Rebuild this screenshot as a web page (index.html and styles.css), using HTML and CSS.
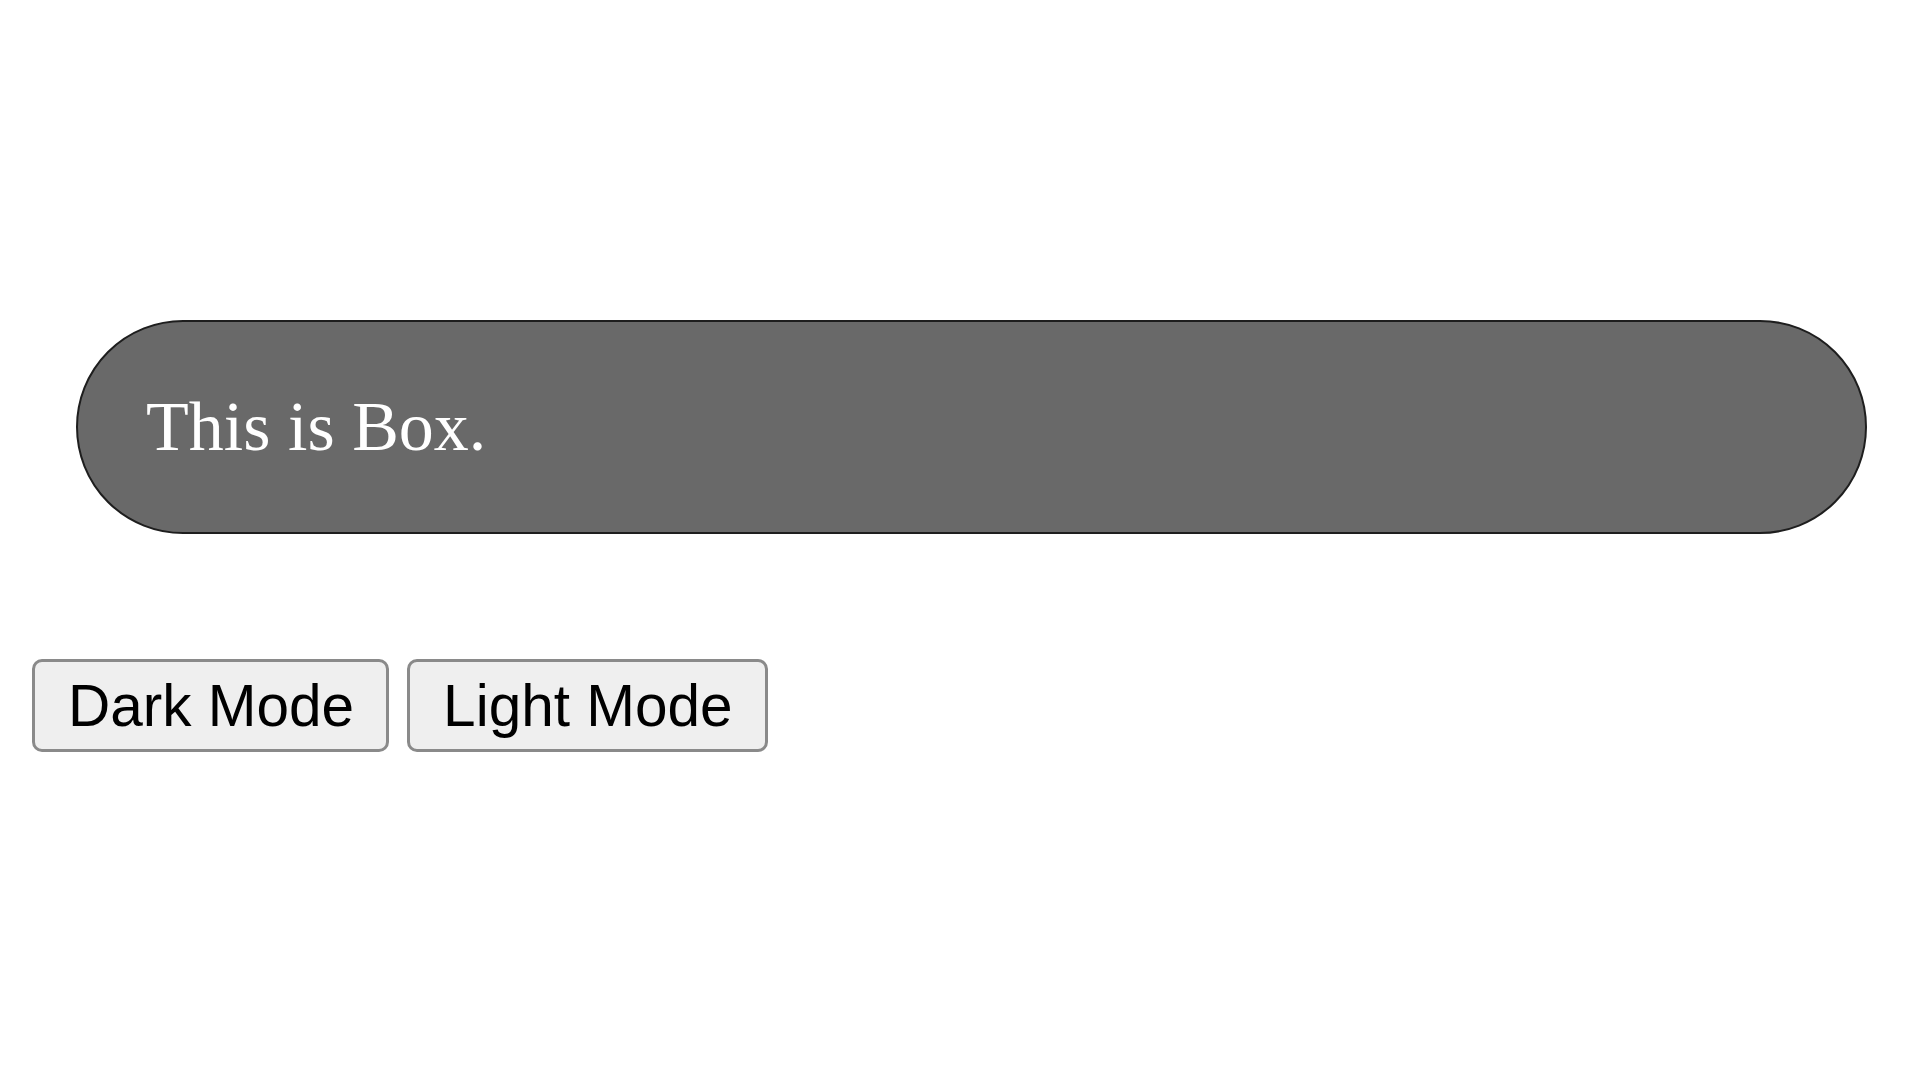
FILE: index.html
```html
<!DOCTYPE html>
<html>
<head>
<meta charset="utf-8">
<link rel="stylesheet" href="styles.css">
</head>
<body>
<main class="page">
  <div class="box">This is Box.</div>
  <div class="controls">
    <button class="mode-btn">Dark Mode</button>
    <button class="mode-btn">Light Mode</button>
  </div>
</main>
</body>
</html>
```
FILE: styles.css
```css
html, body {
  margin: 0;
  padding: 0;
  background: #ffffff;
}

.page {
  padding-top: 320px;
  display: flex;
  flex-direction: column;
}

.box {
  box-sizing: border-box;
  margin-left: 76px;
  width: 1791px;
  height: 214px;
  padding: 0 68px;
  display: flex;
  align-items: center;
  background: #696969;
  border: 2px solid #1e1e1e;
  border-radius: 107px;
  color: #ffffff;
  font-family: "Liberation Serif", "Times New Roman", serif;
  font-size: 70px;
  line-height: 80px;
}

.controls {
  display: flex;
  gap: 18px;
  margin-top: 125px;
  margin-left: 32px;
}

.mode-btn {
  box-sizing: border-box;
  height: 93px;
  padding: 0 32px 0 33px;
  background: #efefef;
  border: 3px solid #8a8a8a;
  border-radius: 10px;
  color: #000000;
  font-family: "Liberation Sans", Arial, sans-serif;
  font-size: 58.5px;
  line-height: 66px;
  cursor: pointer;
}
```
